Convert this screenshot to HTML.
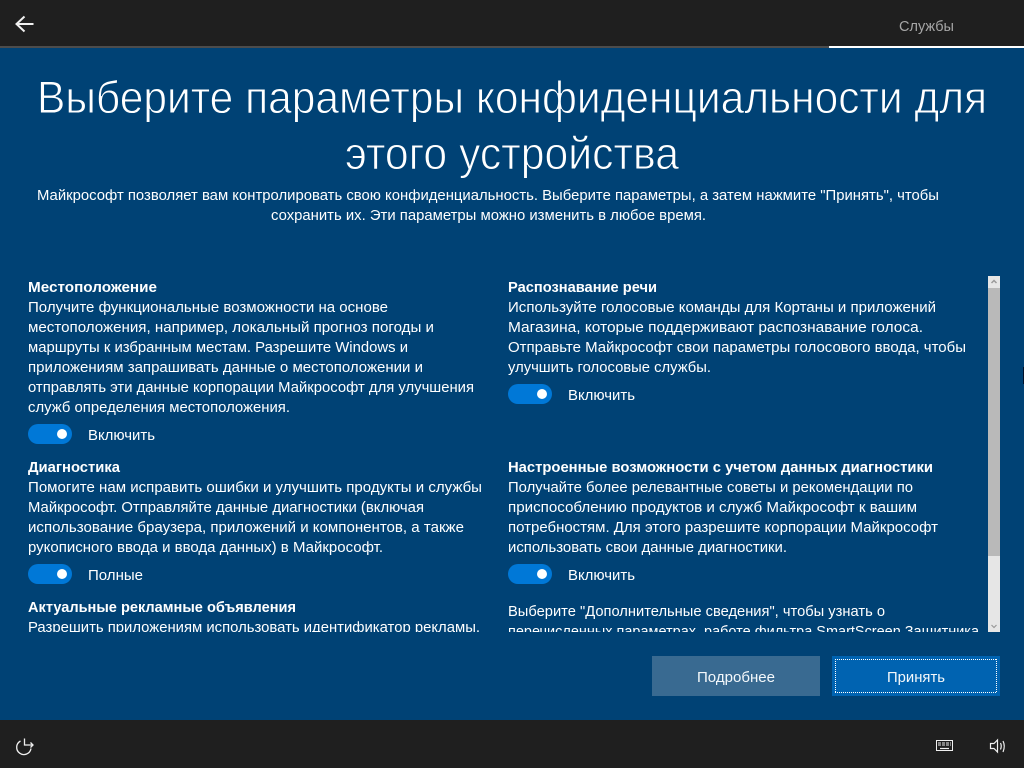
<!DOCTYPE html>
<html lang="ru"><head><meta charset="utf-8"><title>Параметры конфиденциальности</title>
<style>
html,body{margin:0;padding:0;width:1024px;height:768px;overflow:hidden;background:#004275}
svg{display:block;font-family:"Liberation Sans",sans-serif}
text{fill:#fff;font-size:14.6px}
.b{font-weight:bold}
.t{font-size:45px;fill:#fff;stroke:#004275;stroke-width:.9px}
</style></head><body>
<svg width="1024" height="768" viewBox="0 0 1024 768" xmlns="http://www.w3.org/2000/svg">
<defs><clipPath id="c"><rect x="0" y="276" width="988" height="356"/></clipPath></defs>
<rect width="1024" height="768" fill="#004275"/>
<rect width="1024" height="46" fill="#1f1f1f"/>
<rect y="46" width="1024" height="2" fill="#4c4c4c"/>
<rect x="829" y="46" width="195" height="2" fill="#fff"/>
<path d="M33.5 24H17M24.5 16.5L16.5 24L24.5 31.5" fill="none" stroke="#f0f0f0" stroke-width="2"/>
<text x="899" y="31" textLength="55" lengthAdjust="spacingAndGlyphs" style="fill:#a6a6a6">Службы</text>

<text class="t" x="37" y="113" textLength="950" lengthAdjust="spacingAndGlyphs">Выберите параметры конфиденциальности для</text>
<text class="t" x="345" y="169" textLength="334" lengthAdjust="spacingAndGlyphs">этого устройства</text>
<text x="37" y="200" textLength="902" lengthAdjust="spacingAndGlyphs">Майкрософт позволяет вам контролировать свою конфиденциальность. Выберите параметры, а затем нажмите "Принять", чтобы</text>
<text x="271" y="220" textLength="435" lengthAdjust="spacingAndGlyphs">сохранить их. Эти параметры можно изменить в любое время.</text>

<g clip-path="url(#c)">
<text class="b" x="28" y="292" textLength="129" lengthAdjust="spacingAndGlyphs">Местоположение</text>
<text x="28" y="312" textLength="360" lengthAdjust="spacingAndGlyphs">Получите функциональные возможности на основе</text>
<text x="28" y="332" textLength="406" lengthAdjust="spacingAndGlyphs">местоположения, например, локальный прогноз погоды и</text>
<text x="28" y="352" textLength="380" lengthAdjust="spacingAndGlyphs">маршруты к избранным местам. Разрешите Windows и</text>
<text x="28" y="372" textLength="395" lengthAdjust="spacingAndGlyphs">приложениям запрашивать данные о местоположении и</text>
<text x="28" y="392" textLength="446" lengthAdjust="spacingAndGlyphs">отправлять эти данные корпорации Майкрософт для улучшения</text>
<text x="28" y="412" textLength="262" lengthAdjust="spacingAndGlyphs">служб определения местоположения.</text>
<rect x="28" y="424" width="44" height="20" rx="10" fill="#0078d7"/><circle cx="62" cy="434" r="5" fill="#fff"/>
<text x="88" y="440" textLength="67" lengthAdjust="spacingAndGlyphs">Включить</text>

<text class="b" x="28" y="472" textLength="92" lengthAdjust="spacingAndGlyphs">Диагностика</text>
<text x="28" y="492" textLength="454" lengthAdjust="spacingAndGlyphs">Помогите нам исправить ошибки и улучшить продукты и службы</text>
<text x="28" y="512" textLength="396" lengthAdjust="spacingAndGlyphs">Майкрософт. Отправляйте данные диагностики (включая</text>
<text x="28" y="532" textLength="436" lengthAdjust="spacingAndGlyphs">использование браузера, приложений и компонентов, а также</text>
<text x="28" y="552" textLength="355" lengthAdjust="spacingAndGlyphs">рукописного ввода и ввода данных) в Майкрософт.</text>
<rect x="28" y="564" width="44" height="20" rx="10" fill="#0078d7"/><circle cx="62" cy="574" r="5" fill="#fff"/>
<text x="88" y="580" textLength="55" lengthAdjust="spacingAndGlyphs">Полные</text>

<text class="b" x="28" y="612" textLength="268" lengthAdjust="spacingAndGlyphs">Актуальные рекламные объявления</text>
<text x="28" y="632" textLength="452" lengthAdjust="spacingAndGlyphs">Разрешить приложениям использовать идентификатор рекламы,</text>

<text class="b" x="508" y="292" textLength="149" lengthAdjust="spacingAndGlyphs">Распознавание речи</text>
<text x="508" y="312" textLength="428" lengthAdjust="spacingAndGlyphs">Используйте голосовые команды для Кортаны и приложений</text>
<text x="508" y="332" textLength="415" lengthAdjust="spacingAndGlyphs">Магазина, которые поддерживают распознавание голоса.</text>
<text x="508" y="352" textLength="458" lengthAdjust="spacingAndGlyphs">Отправьте Майкрософт свои параметры голосового ввода, чтобы</text>
<text x="508" y="372" textLength="203" lengthAdjust="spacingAndGlyphs">улучшить голосовые службы.</text>
<rect x="508" y="384" width="44" height="20" rx="10" fill="#0078d7"/><circle cx="542" cy="394" r="5" fill="#fff"/>
<text x="568" y="400" textLength="67" lengthAdjust="spacingAndGlyphs">Включить</text>

<text class="b" x="508" y="472" textLength="425" lengthAdjust="spacingAndGlyphs">Настроенные возможности с учетом данных диагностики</text>
<text x="508" y="492" textLength="405" lengthAdjust="spacingAndGlyphs">Получайте более релевантные советы и рекомендации по</text>
<text x="508" y="512" textLength="409" lengthAdjust="spacingAndGlyphs">приспособлению продуктов и служб Майкрософт к вашим</text>
<text x="508" y="532" textLength="430" lengthAdjust="spacingAndGlyphs">потребностям. Для этого разрешите корпорации Майкрософт</text>
<text x="508" y="552" textLength="279" lengthAdjust="spacingAndGlyphs">использовать свои данные диагностики.</text>
<rect x="508" y="564" width="44" height="20" rx="10" fill="#0078d7"/><circle cx="542" cy="574" r="5" fill="#fff"/>
<text x="568" y="580" textLength="67" lengthAdjust="spacingAndGlyphs">Включить</text>
<text x="508" y="616" textLength="377" lengthAdjust="spacingAndGlyphs">Выберите "Дополнительные сведения", чтобы узнать о</text>
<text x="508" y="636" textLength="471" lengthAdjust="spacingAndGlyphs">перечисленных параметрах, работе фильтра SmartScreen Защитника</text>
</g>

<rect x="988" y="276" width="12" height="356" fill="#e6e6e6"/>
<rect x="988" y="288" width="12" height="268" fill="#b9b9b9"/>
<path d="M991.5 283L994 280.5L996.5 283" fill="none" stroke="#9a9a9a" stroke-width="1.5"/>
<path d="M991.5 625L994 627.5L996.5 625" fill="none" stroke="#9a9a9a" stroke-width="1.2"/>
<rect x="1023" y="367" width="1" height="17" fill="#00112b"/>

<rect x="652" y="656" width="168" height="40" fill="#396a91"/>
<text x="697" y="682" textLength="78" lengthAdjust="spacingAndGlyphs" style="fill:#f4f8fb">Подробнее</text>
<rect x="832" y="656" width="168" height="40" fill="#0063b1"/>
<path d="M835 659.5H997M835 692.5H997M835.5 659V693M996.5 659V693" fill="none" stroke="#fff" stroke-dasharray="1 1" shape-rendering="crispEdges"/>
<text x="887" y="682" textLength="58" lengthAdjust="spacingAndGlyphs" style="fill:#f4f8fb">Принять</text>

<rect y="720" width="1024" height="48" fill="#1f1f1f"/>
<path d="M20.5 741A7.2 7.2 0 1 0 31 748.5M24.5 738.5V745H33M30.5 742.5L33 745L30.5 747.5" fill="none" stroke="#f0f0f0" stroke-width="1.3"/>
<g fill="none" stroke="#f0f0f0">
<rect x="936.5" y="740.5" width="16" height="10"/>
<path d="M938 743h13M938 745h13" stroke="#e8e8e8" stroke-dasharray="3 1"/>
<path d="M940 748.5h9" stroke-width="1.2"/>
<path d="M990.5 743.5h3.5l3.5-3.5v12l-3.5-3.5h-3.5zM1000.5 743q1.5 3 0 6.5M1003 741q2.5 5 0 11" stroke-width="1.2"/>
</g>
</svg>
</body></html>
